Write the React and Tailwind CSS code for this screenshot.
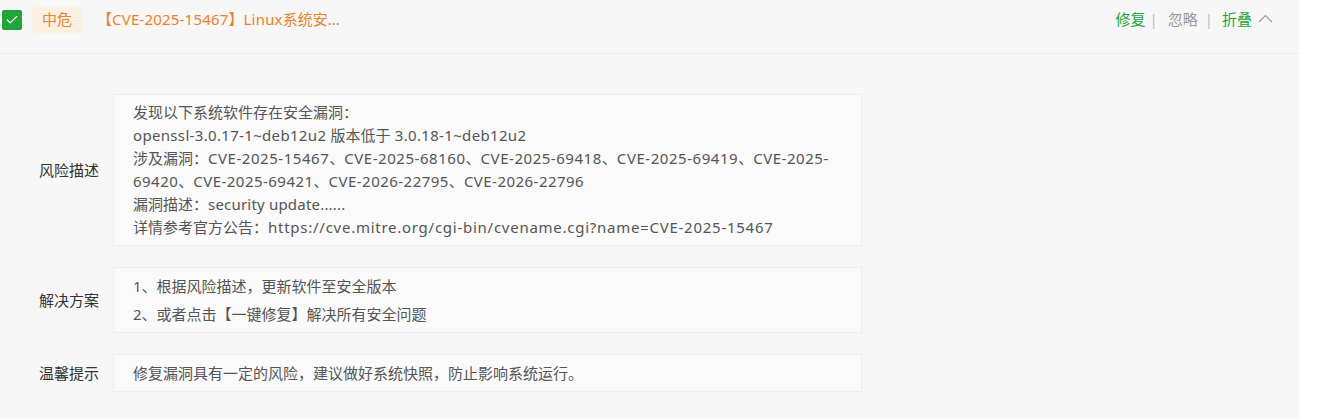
import { Check } from 'lucide-react';

const font = { fontFamily: '"Noto Sans", "Noto Sans CJK SC", sans-serif' };

const Row = ({ label, children, className = '' }) => (
  <div className="flex items-center">
    <div className="w-[113px] shrink-0 pl-[39px] text-[15px] text-[#333]">{label}</div>
    <div
      className={`w-[749px] border border-[#eeeeee] bg-[#fafafa] pl-[19px] text-[15px] text-[#555] ${className}`}
    >
      {children}
    </div>
  </div>
);

const App = () => {
  return (
    <div style={font} className="min-h-[419px] w-full bg-white">
      <div className="min-h-[419px] w-[1299px] bg-[#f7f7f7]">
        {/* header */}
        <div className="flex h-[54px] items-center border-b border-[#ebebeb] pb-[14px] pl-[2px] pr-[26px]">
          <span className="flex h-[20px] w-[20px] items-center justify-center rounded-[2px] bg-[#20a53a]">
            <Check className="h-[14px] w-[14px] text-white" strokeWidth={2} />
          </span>
          <span className="ml-[10px] flex h-[26px] w-[50px] items-center justify-center rounded-[2px] bg-[#fcf0e2] text-[15px] text-[#e8862e]">
            中危
          </span>
          <span className="ml-[15px] text-[15px] text-[#e8822c]">
            【<span className="tracking-[0.2px]">CVE-2025-15467</span>】<span className="tracking-[0.2px]">Linux</span>系统安...
          </span>

          <div className="ml-auto flex items-center text-[15px]">
            <span className="text-[#20a53a]">修复</span>
            <span className="ml-[4px] text-[#bbb]">|</span>
            <span className="ml-[10px] text-[#999]">忽略</span>
            <span className="ml-[7px] text-[#bbb]">|</span>
            <span className="ml-[9px] text-[#20a53a]">折叠</span>
            <svg className="ml-[6px] -mt-[2px]" width="15" height="9" viewBox="0 0 15 9" fill="none">
              <polyline points="1,8 7.5,1.5 14,8" stroke="#999" strokeWidth="1.2" />
            </svg>
          </div>
        </div>

        {/* details */}
        <div className="flex flex-col gap-[21px] pt-[40px] pb-[27px]">
          <Row label="风险描述" className="py-[6px] leading-[23px]">
            <div>发现以下系统软件存在安全漏洞：</div>
            <div className="tracking-[0.33px]">openssl-3.0.17-1~deb12u2 <span className="tracking-normal">版本低于</span> 3.0.18-1~deb12u2</div>
            <div>
              涉及漏洞：<span className="tracking-[0.54px]">CVE-2025-15467</span>、<span className="tracking-[0.54px]">CVE-2025-68160</span>、<span className="tracking-[0.54px]">CVE-2025-69418</span>、<span className="tracking-[0.54px]">CVE-2025-69419</span>、<span className="tracking-[0.54px]">CVE-2025-</span>
            </div>
            <div>
              <span className="tracking-[0.47px]">69420</span>、<span className="tracking-[0.47px]">CVE-2025-69421</span>、<span className="tracking-[0.47px]">CVE-2026-22795</span>、<span className="tracking-[0.47px]">CVE-2026-22796</span>
            </div>
            <div>漏洞描述：<span className="tracking-[0.2px]">security update......</span></div>
            <div>
              详情参考官方公告：<span className="tracking-[0.74px]">https://cve.mitre.org/cgi-bin/cvename.cgi?name=CVE-2025-15467</span>
            </div>
          </Row>
          <Row label="解决方案" className="py-[4px] leading-[28px]">
            <div>1、根据风险描述，更新软件至安全版本</div>
            <div>2、或者点击【一键修复】解决所有安全问题</div>
          </Row>
          <Row label="温馨提示" className="py-[4px] leading-[28px]">
            <div>修复漏洞具有一定的风险，建议做好系统快照，防止影响系统运行。</div>
          </Row>
        </div>
      </div>
    </div>
  );
};

export default App;
